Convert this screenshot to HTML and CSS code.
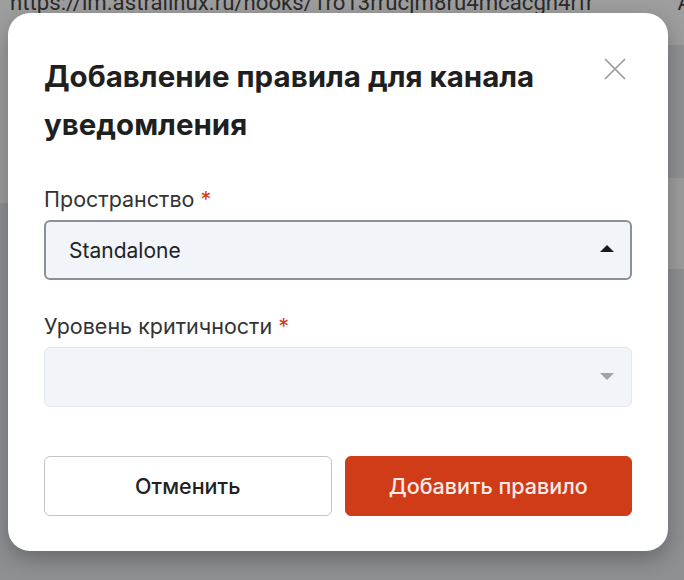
FILE: index.html
```html
<!DOCTYPE html>
<html lang="ru">
<head>
<meta charset="utf-8">
<title>Добавление правила</title>
<link rel="stylesheet" href="styles.css">
</head>
<body>
<div class="page">
  <div class="page-row">
    <span class="page-url">https://im.astralinux.ru/hooks/1ro13rrucjm8ru4mcacgn4rfr</span>
    <span class="page-a">A</span>
  </div>
</div>

<div class="modal" role="dialog">
  <div class="modal-header">
    <h2 class="modal-title">Добавление правила для канала уведомления</h2>
    <button class="close-btn" type="button" aria-label="Закрыть">
      <svg width="22" height="22" viewBox="0 0 22 22"><path d="M1 1 L21 21 M21 1 L1 21" stroke="#9b9b9b" stroke-width="1.7" fill="none"/></svg>
    </button>
  </div>

  <div class="field field-first">
    <div class="field-label">Пространство <span class="req">*</span></div>
    <div class="select select-open">
      <span class="select-value">Standalone</span>
      <span class="caret caret-up"></span>
    </div>
  </div>

  <div class="field field-second">
    <div class="field-label">Уровень критичности <span class="req">*</span></div>
    <div class="select select-empty">
      <span class="select-value"></span>
      <span class="caret caret-down"></span>
    </div>
  </div>

  <div class="actions">
    <button class="btn btn-cancel" type="button">Отменить</button>
    <button class="btn btn-primary" type="button">Добавить правило</button>
  </div>
</div>
</body>
</html>
```

FILE: styles.css
```css
html, body {
  margin: 0;
  padding: 0;
  width: 684px;
  height: 580px;
  overflow: hidden;
}

body {
  background:
    linear-gradient(to bottom, #9e9e9e 0, #9e9e9e 203px, #8f9094 203px, #8f9094 100%) left top / 342px 100% no-repeat,
    linear-gradient(to bottom, #9e9e9e 0, #9e9e9e 45px, #909195 45px, #909195 178px, #9d9d9d 178px, #9d9d9d 269px, #8f9094 269px, #8f9094 100%) right top / 342px 100% no-repeat;
  font-family: "Inter", "Noto Sans", sans-serif;
}

.page-row {
  display: flex;
  justify-content: space-between;
  padding: 0 0 0 10px;
  margin-top: -10px;
  font-family: "Roboto", "Liberation Sans", sans-serif;
  font-size: 22.2px;
  line-height: 24px;
  color: #2b2b2b;
  white-space: nowrap;
}

.page-a {
  margin-right: -8px;
}

.modal {
  position: absolute;
  left: 8px;
  top: 13px;
  width: 660px;
  box-sizing: border-box;
  padding: 39px 36px 35px;
  background: #ffffff;
  border-radius: 22px;
  box-shadow: 0 8px 22px rgba(0, 0, 0, 0.28);
}

.modal-header {
  display: flex;
  align-items: flex-start;
  gap: 16px;
}

.modal-title {
  flex: 1;
  margin: 0;
  font-size: 29.5px;
  line-height: 48px;
  font-weight: 700;
  color: #1f1f1f;
}

.close-btn {
  flex: none;
  width: 22px;
  height: 22px;
  margin: 6px 6px 0 0;
  padding: 0;
  border: 0;
  background: none;
  display: block;
}

.close-btn svg {
  display: block;
}

.field-first {
  margin-top: 37px;
}

.field-second {
  margin-top: 32px;
}

.field-label {
  font-size: 21.5px;
  line-height: 28px;
  color: #333333;
}

.req {
  color: #d13c17;
}

.select {
  margin-top: 7px;
  height: 60px;
  box-sizing: border-box;
  display: flex;
  align-items: center;
  justify-content: space-between;
  background: #f1f4f9;
  border-radius: 6px;
}

.select-open {
  border: 2px solid #8c8f95;
  padding: 0 16px 0 23px;
}

.select-empty {
  border: 1px solid #e3e6eb;
  padding: 0 17px 0 24px;
}

.select-value {
  font-size: 21px;
  color: #222222;
}

.caret {
  width: 0;
  height: 0;
  border-left: 7px solid transparent;
  border-right: 7px solid transparent;
}

.caret-up {
  border-bottom: 7px solid #1a1a1a;
  margin-top: -3px;
}

.caret-down {
  border-top: 7px solid #a0a2a6;
  margin-top: -2px;
}

.actions {
  margin-top: 49px;
  display: grid;
  grid-template-columns: 1fr 1fr;
  gap: 13px;
}

.btn {
  height: 60px;
  border-radius: 6px;
  font-family: "Inter", "Noto Sans", sans-serif;
  font-size: 21.5px;
  font-weight: 500;
  cursor: pointer;
}

.btn-cancel {
  background: #ffffff;
  border: 1px solid #c4c5cc;
  color: #222222;
}

.btn-primary {
  background: #cf3c17;
  border: 1px solid #cf3c17;
  color: #fcebe6;
}
```
